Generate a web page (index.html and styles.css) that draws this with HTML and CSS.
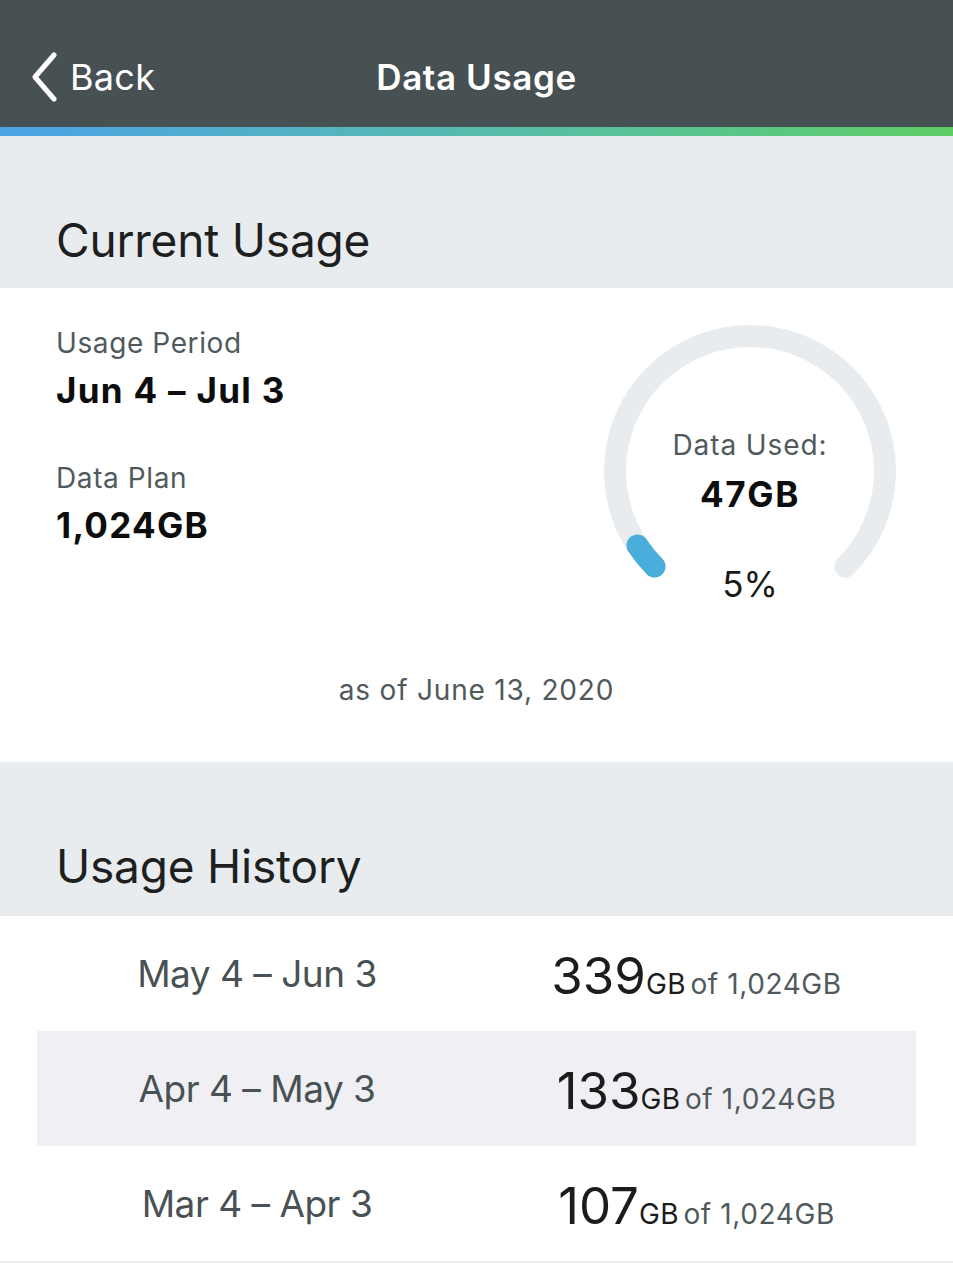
FILE: index.html
```html
<!DOCTYPE html>
<html lang="en">
<head>
<meta charset="utf-8">
<title>Data Usage</title>
<link rel="stylesheet" href="styles.css">
</head>
<body>
<header class="nav">
  <a class="back" href="#">
    <svg class="chev" width="28" height="50" viewBox="0 0 28 50" aria-hidden="true"><path d="M24 3 L5 25 L24 47" fill="none" stroke="#fff" stroke-width="5" stroke-linecap="round" stroke-linejoin="round"/></svg>
    <span>Back</span>
  </a>
  <h1 class="title">Data Usage</h1>
  <span class="spacer"></span>
</header>
<div class="accent"></div>

<section class="section-head"><h2>Current Usage</h2></section>
<section class="current">
  <div class="current-row">
    <div class="info">
      <div class="label">Usage Period</div>
      <div class="value">Jun 4 – Jul 3</div>
      <div class="label label-2">Data Plan</div>
      <div class="value">1,024GB</div>
    </div>
    <div class="gauge">
      <svg width="310" height="310" viewBox="0 0 310 310" aria-hidden="true">
        <path d="M59.54 250.46 A135 135 0 1 1 250.46 250.46" fill="none" stroke="#e9ecee" stroke-width="22" stroke-linecap="round"/>
        <path d="M59.54 250.46 A135 135 0 0 1 42.5 229.5" fill="none" stroke="#4aaedc" stroke-width="22" stroke-linecap="round"/>
      </svg>
      <div class="gauge-text">
        <div class="g-label">Data Used:</div>
        <div class="g-value">47GB</div>
        <div class="g-pct">5%</div>
      </div>
    </div>
  </div>
  <p class="as-of">as of June 13, 2020</p>
</section>

<section class="section-head section-head-2"><h2>Usage History</h2></section>
<ul class="history">
  <li class="row"><span class="period">May 4 – Jun 3</span><span class="amount"><span class="big">339</span><span class="unit">GB</span> <span class="of">of 1,024GB</span></span></li>
  <li class="row alt"><span class="period">Apr 4 – May 3</span><span class="amount"><span class="big">133</span><span class="unit">GB</span> <span class="of">of 1,024GB</span></span></li>
  <li class="row"><span class="period">Mar 4 – Apr 3</span><span class="amount"><span class="big">107</span><span class="unit">GB</span> <span class="of">of 1,024GB</span></span></li>
</ul>
</body>
</html>
```

FILE: styles.css
```css
* { box-sizing: border-box; }
html, body { margin: 0; padding: 0; background: #fff; }
body { font-family: Inter, "Noto Sans", "Liberation Sans", sans-serif; color: #111; }

.nav {
  height: 127px;
  background: #475052;
  display: grid;
  grid-template-columns: 1fr auto 1fr;
  align-items: center;
  padding: 26px 30px 0 30px;
}
.back {
  display: flex;
  align-items: center;
  gap: 12px;
  color: #fff;
  text-decoration: none;
  font-size: 36px;
  letter-spacing: 0.3px;
}
.back .chev { display: block; }
.title {
  margin: 0;
  color: #fff;
  font-size: 35px;
  font-weight: 600;
  letter-spacing: 0.6px;
}
.accent {
  height: 9px;
  background: linear-gradient(90deg, #4aa3e6 0%, #52b5bf 35%, #59c492 70%, #5dcd63 100%);
}

.section-head {
  background: #e9ecee;
  height: 152px;
  display: flex;
  align-items: flex-end;
  padding: 0 56px 20px;
}
.section-head-2 { height: 154px; padding-bottom: 22px; }
.section-head h2 {
  margin: 0;
  font-size: 46px;
  font-weight: 400;
  color: #1d1f20;
  letter-spacing: -0.2px;
  line-height: 1.2;
}

.current { background: #fff; padding: 0 0 56px; }
.current-row {
  display: flex;
  justify-content: space-between;
  padding: 0 48px 0 56px;
}
.info { padding-top: 39px; }
.label { font-size: 28px; line-height: 32px; color: #505a5c; letter-spacing: 0.6px; }
.label-2 { margin-top: 52px; }
.value { margin-top: 11px; font-size: 35px; line-height: 40px; font-weight: 700; color: #0d0d0d; letter-spacing: 1.3px; }

.gauge {
  margin-top: 28px;
  display: grid;
}
.gauge svg, .gauge-text { grid-area: 1 / 1; }
.gauge-text {
  display: flex;
  flex-direction: column;
  align-items: center;
  padding-top: 113px;
}
.g-label { font-size: 28px; line-height: 32px; color: #505a5c; letter-spacing: 0.9px; }
.g-value { margin-top: 13px; font-size: 35px; line-height: 40px; font-weight: 700; color: #0d0d0d; letter-spacing: 1.6px; }
.g-pct { margin-top: 50px; font-size: 35px; line-height: 40px; color: #1a1a1a; }

.as-of {
  margin: 48px 0 0;
  text-align: center;
  font-size: 28px;
  line-height: 32px;
  color: #505a5c;
  letter-spacing: 0.8px;
}

.history {
  list-style: none;
  margin: 0;
  padding: 0 37px;
  border-bottom: 2px solid #eeeff3;
}
.row {
  height: 115px;
  display: grid;
  grid-template-columns: 440px 1fr;
  align-items: center;
}
.row.alt { background: #f0f0f4; }
.period {
  justify-self: center;
  font-size: 37px;
  color: #485254;
  letter-spacing: -0.5px;
}
.amount {
  justify-self: center;
  white-space: nowrap;
  color: #505a5c;
  padding-top: 4px;
}
.big { font-size: 51px; color: #1c1c1c; letter-spacing: 0; }
.unit { font-size: 28px; color: #1c1c1c; letter-spacing: 0.4px; }
.of { font-size: 28px; color: #505a5c; letter-spacing: 0.6px; }
```
